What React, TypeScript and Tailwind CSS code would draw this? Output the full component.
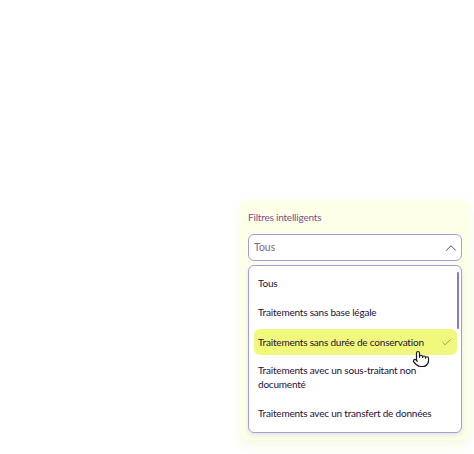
import { Check, ChevronUp, Pointer } from 'lucide-react'

const options = [
  { label: 'Tous' },
  { label: 'Traitements sans base légale' },
  { label: 'Traitements sans durée de conservation', selected: true },
  { label: 'Traitements avec un sous-traitant non documenté' },
  { label: 'Traitements avec un transfert de données' },
]

export default function App() {
  return (
    <div className="flex h-[454px] w-[474px] items-end justify-end bg-white pb-[14px] pr-[4px] font-['Lato',sans-serif]">
      {/* Smart filters panel */}
      <div className="flex h-[240px] w-[230px] flex-col rounded-lg bg-[#fdffe9] px-[8px] pt-[10px] shadow-[0_6px_12px_rgba(240,245,200,0.5)]">
        <p className="text-[10px] leading-[14px] tracking-[-0.2px] text-[#7a4f8a]">Filtres intelligents</p>

        <div className="mt-[10px] flex h-[27px] items-center justify-between rounded-md border border-[#a79be0] bg-white pl-[5px] pr-[1px] text-[10.5px] text-[#7d6a85]">
          <span>Tous</span>
          <ChevronUp className="h-[18px] w-[18px] text-[#4a3a55]" strokeWidth={1.25} />
        </div>

        {/* Open list */}
        <div className="relative mt-[4px] h-[168px] overflow-hidden rounded-md border border-[#a79be0] bg-white pl-[5px] pr-[4px] pt-[4px] text-[10px] leading-[14px] tracking-[-0.2px] text-[#24103a] shadow-[0_2px_4px_rgba(90,70,160,0.15)]">
          <div className="absolute right-[2px] top-[6px] h-[57px] w-[2px] rounded-full bg-[#8577dc]" />
          <ul className="flex flex-col gap-[3px]">
            {options.map((o) => (
              <li
                key={o.label}
                className={
                  o.selected
                    ? 'mt-[1px] -mb-[1px] flex items-center justify-between rounded-md bg-[#f0f97c] px-[4px] py-[6px]'
                    : 'py-[6px] pl-[4px] pr-[20px]'
                }
              >
                <span>{o.label}</span>
                {o.selected && <Check className="mr-[1px] h-[11px] w-[11px] text-[#55603a]" strokeWidth={1.25} />}
              </li>
            ))}
          </ul>
          <Pointer
            className="absolute left-[163px] top-[84px] h-[18px] w-[18px] text-[#1b1b1b]"
            fill="#ffffff"
            strokeWidth={1.6}
          />
        </div>
      </div>
    </div>
  )
}
